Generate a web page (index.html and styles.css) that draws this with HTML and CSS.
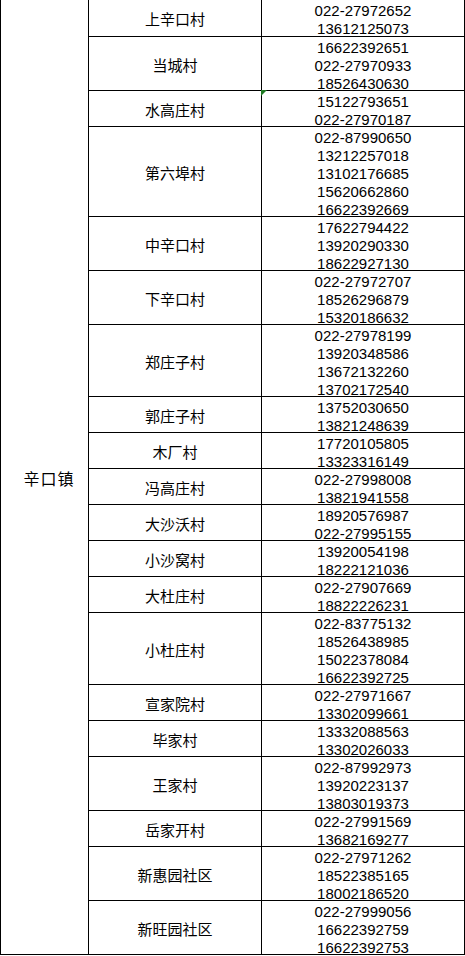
FILE: index.html
```html
<!DOCTYPE html>
<html lang="zh-CN">
<head>
<meta charset="utf-8">
<title>辛口镇联系电话</title>
<link rel="stylesheet" href="styles.css">
</head>
<body>
<div class="sheet">
  <div class="town">辛口镇</div>

  <div class="name r2 first">上辛口村</div>
  <div class="tel r2 first"><span>022-27972652</span><span>13612125073</span></div>

  <div class="name r3">当城村</div>
  <div class="tel r3"><span>16622392651</span><span>022-27970933</span><span>18526430630</span></div>

  <div class="name r2">水高庄村</div>
  <div class="tel r2 flag"><span>15122793651</span><span>022-27970187</span></div>

  <div class="name r5">第六埠村</div>
  <div class="tel r5"><span>022-87990650</span><span>13212257018</span><span>13102176685</span><span>15620662860</span><span>16622392669</span></div>

  <div class="name r3">中辛口村</div>
  <div class="tel r3"><span>17622794422</span><span>13920290330</span><span>18622927130</span></div>

  <div class="name r3">下辛口村</div>
  <div class="tel r3"><span>022-27972707</span><span>18526296879</span><span>15320186632</span></div>

  <div class="name r4">郑庄子村</div>
  <div class="tel r4"><span>022-27978199</span><span>13920348586</span><span>13672132260</span><span>13702172540</span></div>

  <div class="name r2">郭庄子村</div>
  <div class="tel r2"><span>13752030650</span><span>13821248639</span></div>

  <div class="name r2">木厂村</div>
  <div class="tel r2"><span>17720105805</span><span>13323316149</span></div>

  <div class="name r2">冯高庄村</div>
  <div class="tel r2"><span>022-27998008</span><span>13821941558</span></div>

  <div class="name r2">大沙沃村</div>
  <div class="tel r2"><span>18920576987</span><span>022-27995155</span></div>

  <div class="name r2">小沙窝村</div>
  <div class="tel r2"><span>13920054198</span><span>18222121036</span></div>

  <div class="name r2">大杜庄村</div>
  <div class="tel r2"><span>022-27907669</span><span>18822226231</span></div>

  <div class="name r4">小杜庄村</div>
  <div class="tel r4"><span>022-83775132</span><span>18526438985</span><span>15022378084</span><span>16622392725</span></div>

  <div class="name r2">宣家院村</div>
  <div class="tel r2"><span>022-27971667</span><span>13302099661</span></div>

  <div class="name r2">毕家村</div>
  <div class="tel r2"><span>13332088563</span><span>13302026033</span></div>

  <div class="name r3">王家村</div>
  <div class="tel r3"><span>022-87992973</span><span>13920223137</span><span>13803019373</span></div>

  <div class="name r2">岳家开村</div>
  <div class="tel r2"><span>022-27991569</span><span>13682169277</span></div>

  <div class="name r3">新惠园社区</div>
  <div class="tel r3"><span>022-27971262</span><span>18522385165</span><span>18002186520</span></div>

  <div class="name r3">新旺园社区</div>
  <div class="tel r3"><span>022-27999056</span><span>16622392759</span><span>16622392753</span></div>
</div>
</body>
</html>
```

FILE: styles.css
```css
html, body {
  margin: 0;
  padding: 0;
  background: #ffffff;
}

body {
  width: 465px;
  height: 956px;
  overflow: hidden;
  font-family: "Noto Sans CJK SC", "Noto Sans", sans-serif;
  color: #000000;
}

.sheet {
  display: grid;
  grid-template-columns: 89px 173px 203px;
  width: 465px;
}

.town {
  grid-column: 1;
  grid-row: 1 / span 20;
  box-sizing: border-box;
  border-left: 1px solid #000;
  border-right: 1px solid #000;
  border-bottom: 1px solid #000;
  display: flex;
  align-items: center;
  justify-content: center;
  padding-left: 9px;
  padding-top: 2px;
  font-size: 16px;
  letter-spacing: 1px;
}

.name,
.tel {
  box-sizing: border-box;
  border-right: 1px solid #000;
  border-bottom: 1px solid #000;
  display: flex;
  flex-direction: column;
  align-items: center;
  justify-content: center;
  line-height: 18px;
}

.name {
  grid-column: 2;
  padding-top: 2px;
  font-size: 15px;
}

.tel {
  grid-column: 3;
  position: relative;
  padding-top: 4px;
  font-family: "Liberation Sans", Arial, sans-serif;
  font-size: 15px;
}

.tel span {
  display: block;
  height: 18px;
  line-height: 18px;
  flex: none;
  white-space: nowrap;
}

.r2 { height: 36px; }
.r3 { height: 54px; }
.r4 { height: 72px; }
.r5 { height: 90px; }

.r2.first { height: 37px; }

.flag::before {
  content: "";
  position: absolute;
  top: -1px;
  left: -1px;
  width: 0;
  height: 0;
  border-top: 6px solid #1f7a24;
  border-right: 6px solid transparent;
}
```
